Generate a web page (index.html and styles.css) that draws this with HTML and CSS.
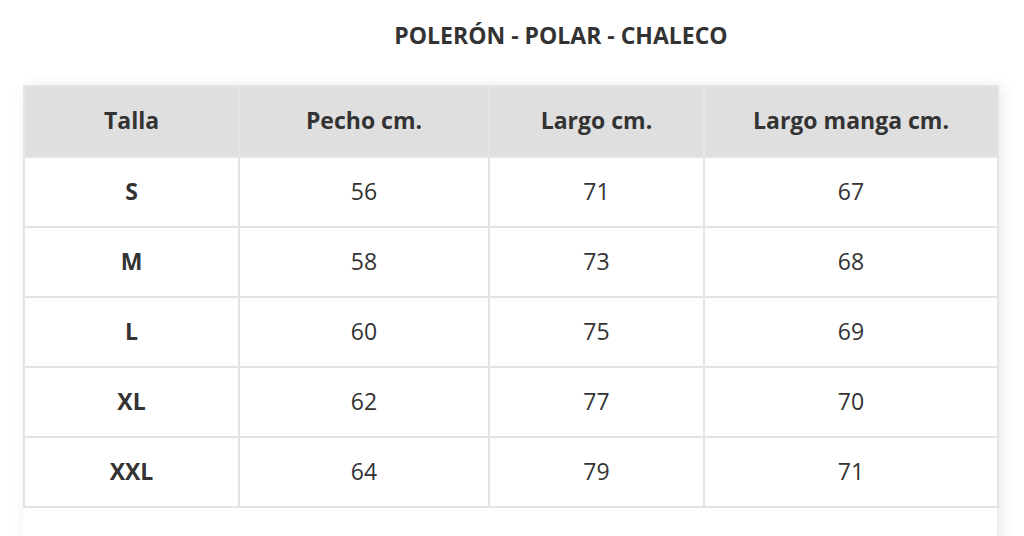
FILE: index.html
```html
<!DOCTYPE html>
<html lang="es">
<head>
<meta charset="utf-8">
<title>Tallas</title>
<link rel="stylesheet" href="styles.css">
</head>
<body>
<h1 class="title">POLERÓN - POLAR - CHALECO</h1>
<div class="card">
  <table class="sizes">
    <colgroup>
      <col class="c1"><col class="c2"><col class="c3"><col class="c4">
    </colgroup>
    <thead>
      <tr><th>Talla</th><th>Pecho cm.</th><th>Largo cm.</th><th>Largo manga cm.</th></tr>
    </thead>
    <tbody>
      <tr><td class="size">S</td><td>56</td><td>71</td><td>67</td></tr>
      <tr><td class="size">M</td><td>58</td><td>73</td><td>68</td></tr>
      <tr><td class="size">L</td><td>60</td><td>75</td><td>69</td></tr>
      <tr><td class="size">XL</td><td>62</td><td>77</td><td>70</td></tr>
      <tr><td class="size">XXL</td><td>64</td><td>79</td><td>71</td></tr>
    </tbody>
  </table>
  <div class="card-foot"></div>
</div>
</body>
</html>
```
FILE: styles.css
```css
html, body {
  margin: 0;
  padding: 0;
  background: #ffffff;
  overflow: hidden;
}
body {
  font-family: "Open Sans", "Liberation Sans", sans-serif;
  color: #333333;
}
.title {
  margin: 0;
  padding: 20px 0 0 98px;
  height: 85px;
  box-sizing: border-box;
  text-align: center;
  font-size: 23px;
  line-height: 30px;
  font-weight: 700;
  color: #333333;
}
.card {
  margin-left: 23px;
  width: 974px;
  background: #ffffff;
  box-shadow: 4px 2px 14px rgba(0, 0, 0, 0.10);
}
.sizes {
  width: 974px;
  border-collapse: collapse;
  table-layout: fixed;
}
.c1 { width: 215px; }
.c2 { width: 250px; }
.c3 { width: 215px; }
.c4 { width: 294px; }
.sizes th,
.sizes td {
  border: 2px solid #e3e3e3;
  text-align: center;
  font-size: 23px;
  padding: 0 0 3px;
}
.sizes th {
  height: 66px;
  background: #dfdfdf;
  font-weight: 700;
  border-color: #e5e5e5;
}
.sizes td {
  height: 65px;
  font-weight: 400;
}
.sizes td.size {
  font-weight: 700;
}
.card-foot {
  height: 29px;
}
```
